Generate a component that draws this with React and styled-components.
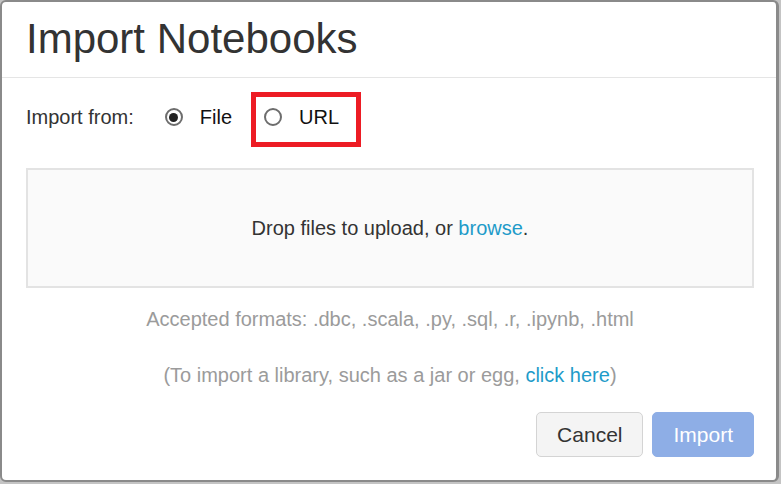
import { createGlobalStyle } from "styled-components"
import styled from "styled-components"

const GlobalStyle = createGlobalStyle`
  html, body {
    margin: 0;
    padding: 0;
    background: #c4c4c4;
    font-family: "Liberation Sans", Arial, sans-serif;
  }
`

export default function App() {
    return (
        <>
            <GlobalStyle />
            <Modal>
                <Header>
                    <Title>Import Notebooks</Title>
                </Header>

                <Body>
                    <SourceRow>
                        <Label>Import from:</Label>
                        <Option>
                            <Radio checked />
                            <span>File</span>
                        </Option>
                        <Option highlighted>
                            <Radio />
                            <span>URL</span>
                        </Option>
                    </SourceRow>

                    <DropZone>
                        Drop files to upload, or&nbsp;<Link>browse</Link>.
                    </DropZone>

                    <Hint>Accepted formats: .dbc, .scala, .py, .sql, .r, .ipynb, .html</Hint>
                    <Hint spaced>
                        (To import a library, such as a jar or egg, <Link>click here</Link>)
                    </Hint>
                </Body>

                <Footer>
                    <Button>Cancel</Button>
                    <Button primary>Import</Button>
                </Footer>
            </Modal>
        </>
    )
}

const Modal = styled.div`
width: 779px;
height: 482px;
box-sizing: border-box;
background: #ffffff;
border: 2px solid #8a8a8a;
border-right-width: 3px;
border-radius: 6px;
display: flex;
flex-direction: column;
color: #333333;
`

const Header = styled.div`
padding: 13px 24px 14px 24px;
border-bottom: 1px solid #e5e5e5;
`

const Title = styled.h1`
margin: 0;
font-size: 42px;
line-height: 48px;
font-weight: 400;
color: #333333;
`

const Body = styled.div`
padding: 14px 22px 0 24px;
display: flex;
flex-direction: column;
`

const SourceRow = styled.div`
display: flex;
align-items: center;
font-size: 20px;
line-height: 24px;
`

const Label = styled.span`
color: #333333;
margin-right: 31px;
`

const Option = styled.label`
display: flex;
align-items: center;
gap: 17px;
color: #111111;
${(p) => p.highlighted ? `
    margin-left: 19px;
    margin-bottom: -5px;
    padding: 8px 17px 13px 8px;
    border: 5px solid #ed1c24;
` : ""}
`

const Radio = styled.span`
width: 18px;
height: 18px;
box-sizing: border-box;
border: 2px solid #6d6d6d;
border-radius: 50%;
display: flex;
align-items: center;
justify-content: center;
&::after {
    content: "";
    width: 9px;
    height: 9px;
    border-radius: 50%;
    background: ${(p) => p.checked ? "#222222" : "transparent"};
}
`

const DropZone = styled.div`
margin-top: 26px;
height: 120px;
box-sizing: border-box;
border: 2px solid #e3e3e3;
background: #fafafa;
display: flex;
align-items: center;
justify-content: center;
font-size: 20px;
color: #333333;
`

const Link = styled.a`
color: #1e9bc9;
text-decoration: none;
cursor: pointer;
`

const Hint = styled.p`
margin: ${(p) => p.spaced ? "32px" : "19px"} 0 0 0;
text-align: center;
font-size: 20px;
line-height: 24px;
color: #9b9b9b;
`

const Footer = styled.div`
display: flex;
justify-content: flex-end;
gap: 9px;
padding: 25px 22px 0 24px;
`

const Button = styled.button`
height: 45px;
padding: 0 20px;
font-family: "Liberation Sans", Arial, sans-serif;
font-size: 21px;
border-radius: 5px;
border: 1px solid ${(p) => p.primary ? "#8eaee6" : "#d4d4d4"};
background: ${(p) => p.primary ? "#8eaee6" : "#f4f4f4"};
color: ${(p) => p.primary ? "#ffffff" : "#333333"};
`
